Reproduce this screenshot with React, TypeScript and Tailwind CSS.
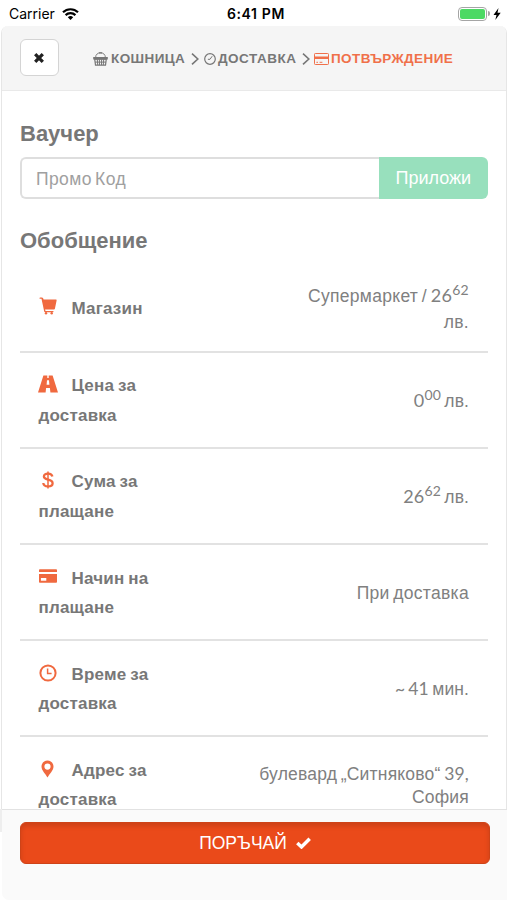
import type { ReactNode } from "react";
import clsx from "clsx";

type IconProps = {
    className?: string
}

function WifiIcon({ className }: IconProps) {
    return (
        <svg className={className} viewBox="0 0 17 12" fill="none" stroke="currentColor" strokeWidth="2.2">
            <path d="M1 4.3a10.8 10.8 0 0 1 15 0M3.6 7.1a7 7 0 0 1 9.8 0" />
            <path d="M8.5 12 5.8 9.3a4 4 0 0 1 5.4 0Z" fill="currentColor" stroke="none" />
        </svg>
    )
}

function CloseIcon({ className }: IconProps) {
    return (
        <svg className={className} viewBox="0 0 10 10" stroke="currentColor" strokeWidth="3.3">
            <path d="M1.2 1.2 8.8 8.8M8.8 1.2 1.2 8.8" />
        </svg>
    )
}

function BasketIcon({ className }: IconProps) {
    return (
        <svg className={className} viewBox="0 0 15 14" fill="none" stroke="currentColor">
            <path d="M2.6 5.5C2.6 2.4 4.8.8 7.5.8s4.9 1.6 4.9 4.7" strokeWidth=".9" />
            <path d="M5.9.8h3.2" strokeWidth="1.3" />
            <path d="M.2 5h14.6v2.4H.2Z" fill="currentColor" stroke="none" />
            <path d="M1.7 7.2h11.6l-.8 5.9h-10Z" strokeWidth="1.2" />
            <path d="M4.3 7.2l.4 5.9M6.4 7.2l.1 5.9M8.6 7.2l-.1 5.9M10.7 7.2l-.4 5.9M2 10.1h11" strokeWidth="1" />
        </svg>
    )
}

function ThinClockIcon({ className }: IconProps) {
    return (
        <svg className={className} viewBox="0 0 12 12" fill="none" stroke="currentColor" strokeWidth="1.2">
            <circle cx="6" cy="6" r="5.3" />
            <path d="M8.2 3.2 6 6.3H3.9" strokeWidth="1" />
        </svg>
    )
}

function ChevronIcon({ className }: IconProps) {
    return (
        <svg className={className} viewBox="0 0 8 12" fill="none" stroke="currentColor" strokeWidth="1.6">
            <path d="M1 .7 6.8 6 1 11.3" />
        </svg>
    )
}

function CardOutlineIcon({ className }: IconProps) {
    return (
        <svg className={className} viewBox="0 0 15 12" fill="none" stroke="currentColor">
            <rect x=".5" y=".5" width="14" height="11" rx=".8" />
            <path d="M.5 4.7h14" strokeWidth="2.4" />
            <path d="M2.4 9.3h1.6M5.6 9.3h2.8" strokeWidth="1" />
        </svg>
    )
}

function CartIcon({ className }: IconProps) {
    return (
        <svg className={className} viewBox="0 0 18 18" fill="currentColor">
            <path d="M1.1.4h1.8c.5 0 .9.2 1.100.7l.6 1.400h12.300c.5 0 .8.400.7.900l-1.700 8.300c-.1.500-.4.800-.9.800H6.100l.4 1.500h7.500c.8 0 .8 1.300 0 1.300H6.100c-.5 0-.8-.3-.9-.7L2.500 1.800H1.100C.3 1.800.3.400 1.100.400Z" />
            <circle cx="7" cy="16.300" r="1.200" />
            <circle cx="12.700" cy="16.300" r="1.200" />
        </svg>
    )
}

function RoadIcon({ className }: IconProps) {
    return (
        <svg className={className} viewBox="0 0 20 18" fill="currentColor">
            <path d="M5.400.5h3.900v2.500h1.400V.5h3.900L20 17.500h-7.600L11.900 13H8.100l-.5 4.500H0ZM9 5.200l-.4 4.600h2.800L11 5.200Z" fillRule="evenodd" />
        </svg>
    )
}

function DollarIcon({ className }: IconProps) {
    return (
        <svg className={className} viewBox="0 0 12 18" fill="none" stroke="currentColor" strokeWidth="2.300">
            <path d="M10.400 5.600C10 3.700 8.400 2.700 6 2.700c-2.500 0-4.100 1-4.100 2.900 0 4.300 8.700 1.900 8.700 6.600 0 2-1.700 3.200-4.600 3.200-2.700 0-4.500-1.200-4.700-3.400" />
            <path d="M6 .4v17.200" strokeWidth="1.500" />
        </svg>
    )
}

function CardIcon({ className }: IconProps) {
    return (
        <svg className={className} viewBox="0 0 18 14" fill="currentColor">
            <path d="M.8.2h16.400c.4 0 .8.3.8.8v1.900H0V1C0 .5.4.2.8.2ZM0 4.900h18v8c0 .5-.4.8-.8.8H.8c-.4 0-.8-.3-.8-.8ZM1.900 9v2.800h5.400V9Z" fillRule="evenodd" />
        </svg>
    )
}

function ClockIcon({ className }: IconProps) {
    return (
        <svg className={className} viewBox="0 0 18 18" fill="none" stroke="currentColor">
            <circle cx="9" cy="9" r="7.600" strokeWidth="2" />
            <path d="M8.600 4.400v5h4" strokeWidth="1.500" />
        </svg>
    )
}

function PinIcon({ className }: IconProps) {
    return (
        <svg className={className} viewBox="0 0 13 18" fill="currentColor">
            <path d="M6.500.6C3.100.6.5 3.200.5 6.500c0 4.100 4.100 7.400 6 11 1.900-3.600 6-6.900 6-11C12.500 3.200 9.900.6 6.500.6Zm0 2.900a3.100 3.100 0 1 1 0 6.200 3.100 3.100 0 0 1 0-6.200Z" fillRule="evenodd" />
        </svg>
    )
}

function CheckIcon({ className }: IconProps) {
    return (
        <svg className={className} viewBox="0 0 15 12" fill="none" stroke="currentColor" strokeWidth="3.500">
            <path d="m1.300 5.900 4.200 4L13.700 1.700" />
        </svg>
    )
}

function StatusBar() {
    return (
        <div className="flex h-[26px] shrink-0 items-center bg-white pl-[9px] pr-[6px] pt-px font-['Inter',sans-serif] text-[14px] text-black">
            <div className="flex w-[218px] items-center">
                <span>Carrier</span>
                <WifiIcon className="ml-[7px] h-3 w-[17px]" />
            </div>
            <span className="text-[14px] font-semibold tracking-[0.600px]">6:41 PM</span>
            <div className="ml-auto flex items-center">
                <div className="h-[14px] w-[29px] rounded-[4px] border border-[#a5a5a5] p-px">
                    <div className="h-full rounded-[2px] bg-[#4cd964]" />
                </div>
                <div className="ml-px h-[5px] w-[2px] rounded-r bg-[#a5a5a5]" />
                <svg className="ml-[3px] h-[12px] w-[8px]" viewBox="0 0 8 12" fill="currentColor">
                    <path d="M5.500 0 .5 7h3L2.300 12 7.700 4.800H4.500Z" />
                </svg>
            </div>
        </div>
    )
}

type StepProps = {
    icon: ReactNode,
    title: string,
    className: string
}

function Step({ icon, title, className }: StepProps) {
    return (
        <div className={clsx("flex items-center whitespace-nowrap text-[13.500px] font-bold", className)}>
            {icon}
            <span className="pt-px">{title}</span>
        </div>
    )
}

function Header() {
    return (
        <header className="flex h-[65px] shrink-0 items-center border-b border-[#e9e9e9] bg-[#f5f5f5] pl-[18px] pb-[2px] text-[#777]">
            <button className="mt-px flex h-[37px] w-[38.500px] items-center justify-center rounded-[6px] border-[1.500px] border-[#d4d4d4] bg-white text-[#222]">
                <CloseIcon className="size-[10px]" />
            </button>
            <nav className="ml-[34.500px] flex items-center pt-[3px]">
                <Step className="w-[98px] tracking-[0.400px]" icon={<BasketIcon className="mr-[3px] h-[14px] w-[15px]" />} title="КОШНИЦА" />
                <ChevronIcon className="h-3 w-2" />
                <Step className="ml-[5px] w-[98px] tracking-[0.500px]" icon={<ThinClockIcon className="mr-[2px] size-3" />} title="ДОСТАВКА" />
                <ChevronIcon className="h-3 w-2" />
                <Step className="ml-[4px] tracking-[0.400px] text-[#f0704a]" icon={<CardOutlineIcon className="mr-[2px] h-3 w-[15px]" />} title="ПОТВЪРЖДЕНИЕ" />
            </nav>
        </header>
    )
}

type SummaryRowProps = {
    icon: ReactNode,
    /** first line of the label, next to the icon */
    label: string,
    /** second line, under the icon */
    labelRest?: string,
    className?: string,
    children: ReactNode
}

function SummaryRow({ icon, label, labelRest, className, children }: SummaryRowProps) {
    return (
        <div className={clsx("flex items-center border-b-2 border-[#e2e2e2] px-[18.500px] pt-[2px]", className ?? "h-[96.200px]")}>
            <div className="text-[17px] font-bold leading-[29.300px] tracking-[0.200px] text-[#777] [word-spacing:-1px]">
                <div className="flex">
                    <span className="flex w-[33px] items-center pb-[4px] text-[#f0693f]">
                        <span className="flex w-[18px] justify-center">{icon}</span>
                    </span>
                    <span>{label}</span>
                </div>
                {labelRest && <div>{labelRest}</div>}
            </div>
            <div className="ml-auto text-right text-[17.500px] tracking-[0.100px] text-[#808080] [word-spacing:-1.500px]">{children}</div>
        </div>
    )
}

type PriceProps = {
    leva: string,
    stotinki: string
}

/** Price with the hundredths raised */
function Price({ leva, stotinki }: PriceProps) {
    return (
        <span className="font-['Lato',sans-serif] text-[18px]">
            {leva}<sup className="top-[-7px] text-[14px]">{stotinki}</sup>
        </span>
    )
}

function Voucher() {
    return (
        <section>
            <h2 className="text-[22px] font-bold leading-6">Ваучер</h2>
            <div className="mt-[11px] flex h-[42px]">
                <input
                    className="w-[359px] rounded-l-[6px] border-2 border-r-0 border-[#dedede] bg-white pl-[14px] pt-[2px] text-[17.500px] tracking-[0.400px] [word-spacing:-2px] placeholder:text-[#a0a0a0]"
                    placeholder="Промо Код"
                />
                <button className="flex-1 rounded-r-[6px] bg-[#98e0bd] text-[18px] text-white">Приложи</button>
            </div>
        </section>
    )
}

export default function App() {
    return (
        <div className="flex h-[900px] w-[507px] flex-col overflow-hidden bg-white font-['Liberation_Sans',Arial,sans-serif] text-[#777]">
            <StatusBar />
            <div className="ml-px flex min-h-0 flex-1 flex-col overflow-hidden rounded-t-[7px] border-x border-[#e6e6e6]">
                <Header />
                <main className="min-h-0 flex-1 overflow-hidden pl-[18px] pr-[18.500px] pt-[31px]">
                    <Voucher />
                    <h2 className="mt-[30px] text-[22px] font-bold leading-6">Обобщение</h2>
                    <div className="mt-[11px]">
                        <SummaryRow className="h-[88.500px]" icon={<CartIcon className="size-[18px]" />} label="Магазин">
                            <div className="leading-[26px] tracking-[0.300px]">
                                Супермаркет / <Price leva="26" stotinki="62" />
                                <br />
                                лв.
                            </div>
                        </SummaryRow>
                        <SummaryRow icon={<RoadIcon className="h-[18px] w-5 shrink-0" />} label="Цена за" labelRest="доставка">
                            <Price leva="0" stotinki="00" /> лв.
                        </SummaryRow>
                        <SummaryRow icon={<DollarIcon className="h-[18px] w-3" />} label="Сума за" labelRest="плащане">
                            <Price leva="26" stotinki="62" /> лв.
                        </SummaryRow>
                        <SummaryRow icon={<CardIcon className="h-[14px] w-[18px]" />} label="Начин на" labelRest="плащане">
                            <span className="tracking-[0.300px]">При доставка</span>
                        </SummaryRow>
                        <SummaryRow icon={<ClockIcon className="size-[18px]" />} label="Време за" labelRest="доставка">
                            <span className="font-['Lato',sans-serif]">~ 41</span> мин.
                        </SummaryRow>
                        <SummaryRow icon={<PinIcon className="h-[18px] w-[13px]" />} label="Адрес за" labelRest="доставка">
                            <div className="leading-[23px] tracking-[0.200px]">
                                булевард „Ситняково“ <span className="font-['Lato',sans-serif]">39,</span>
                                <br />
                                София
                            </div>
                        </SummaryRow>
                    </div>
                </main>
            </div>
            <div className="flex h-[91px] shrink-0">
                <div className="h-[23px] w-[2px] bg-[#eee]" />
                <footer className="flex-1 rounded-bl-[7px] border-t border-[#e2e2e2] bg-[#fafafa] pl-[18px] pr-[17px] pt-3">
                    <button className="flex h-[42px] w-full items-center justify-center rounded-[6px] border border-[#ce4318] bg-[#ea4a1a] text-[17.500px] text-white shadow-[inset_0_3px_5px_rgba(0,0,0,0.13)]">
                        ПОРЪЧАЙ
                        <CheckIcon className="ml-[9px] h-3 w-[15px]" />
                    </button>
                </footer>
            </div>
        </div>
    )
}
